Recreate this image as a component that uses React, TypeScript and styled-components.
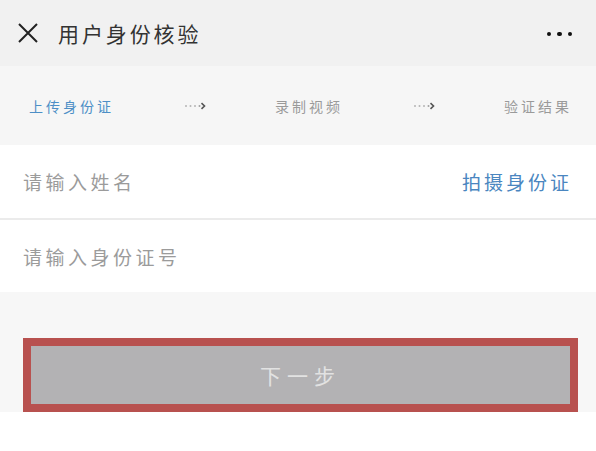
import React from "react";
import styled, { createGlobalStyle } from "styled-components";

const GlobalStyle = createGlobalStyle`
  html, body {
    margin: 0;
    padding: 0;
    background: #ffffff;
  }
  body {
    font-family: "Noto Sans CJK SC", "Noto Sans", sans-serif;
  }
`;

const Page = styled.div`
  width: 596px;
  min-height: 451px;
  background: #ffffff;
`;

const Header = styled.div`
  height: 66px;
  background: #f1f1f1;
  display: flex;
  align-items: center;
  padding: 0 24px 0 18px;
  box-sizing: border-box;
`;

const Title = styled.div`
  margin-left: 20px;
  font-size: 21px;
  letter-spacing: 2.9px;
  color: #333333;
  flex: 1;
`;

const Dots = styled.div`
  display: flex;
  gap: 6px;
  margin-top: 2px;
`;

const Dot = styled.span`
  width: 4.5px;
  height: 4.5px;
  border-radius: 50%;
  background: #111111;
`;

const Steps = styled.div`
  height: 79px;
  background: #f6f6f6;
  display: flex;
  align-items: center;
  justify-content: space-between;
  padding: 0 24px 0 29px;
  box-sizing: border-box;
`;

const Step = styled.span<{ active?: boolean }>`
  font-size: 14px;
  letter-spacing: 3px;
  color: ${(p) => (p.active ? "#4d8fc6" : "#9a9a9a")};
`;

const Arrow = () => (
  <svg width="22" height="8" viewBox="0 0 22 8">
    <circle cx="2" cy="4" r="1" fill="#b5b5b5" />
    <circle cx="6.5" cy="4" r="1" fill="#b5b5b5" />
    <circle cx="11" cy="4" r="1" fill="#b5b5b5" />
    <circle cx="15.5" cy="4" r="1" fill="#a0a0a0" />
    <path d="M17.5 1.2 L20.5 4 L17.5 6.8" fill="none" stroke="#555" strokeWidth="1.6" />
  </svg>
);

const Form = styled.div`
  background: #ffffff;
`;

const Row = styled.div<{ divider?: boolean }>`
  height: ${(p) => (p.divider ? "75px" : "72px")};
  display: flex;
  align-items: center;
  justify-content: space-between;
  padding: 0 24px 0 23px;
  box-sizing: border-box;
  border-bottom: ${(p) => (p.divider ? "2px solid #ebebeb" : "none")};
`;

const Placeholder = styled.span`
  font-size: 19px;
  letter-spacing: 3.5px;
  color: #9b9b9b;
`;

const LinkText = styled.span`
  font-size: 19px;
  letter-spacing: 3px;
  color: #4a86c0;
`;

const Footer = styled.div`
  background: #f7f7f7;
  padding: 46px 18px 0 23px;
`;

const NextButton = styled.button`
  display: block;
  width: 555px;
  height: 74px;
  margin: 0;
  border: 8px solid #b8514f;
  background: #b3b2b4;
  color: #e2e2e2;
  font-family: "Noto Sans CJK SC", sans-serif;
  font-size: 21px;
  letter-spacing: 6px;
  box-sizing: border-box;
  padding: 0;
`;

const CloseIcon = () => (
  <svg width="20" height="20" viewBox="0 0 20 20">
    <path d="M1 1 L19 19 M19 1 L1 19" stroke="#222" strokeWidth="2" fill="none" />
  </svg>
);

export default function App() {
  return (
    <Page>
      <GlobalStyle />
      <Header>
        <CloseIcon />
        <Title>用户身份核验</Title>
        <Dots>
          <Dot />
          <Dot />
          <Dot />
        </Dots>
      </Header>
      <Steps>
        <Step active>上传身份证</Step>
        <Arrow />
        <Step>录制视频</Step>
        <Arrow />
        <Step>验证结果</Step>
      </Steps>
      <Form>
        <Row divider>
          <Placeholder>请输入姓名</Placeholder>
          <LinkText>拍摄身份证</LinkText>
        </Row>
        <Row>
          <Placeholder>请输入身份证号</Placeholder>
        </Row>
      </Form>
      <Footer>
        <NextButton>下一步</NextButton>
      </Footer>
    </Page>
  );
}
